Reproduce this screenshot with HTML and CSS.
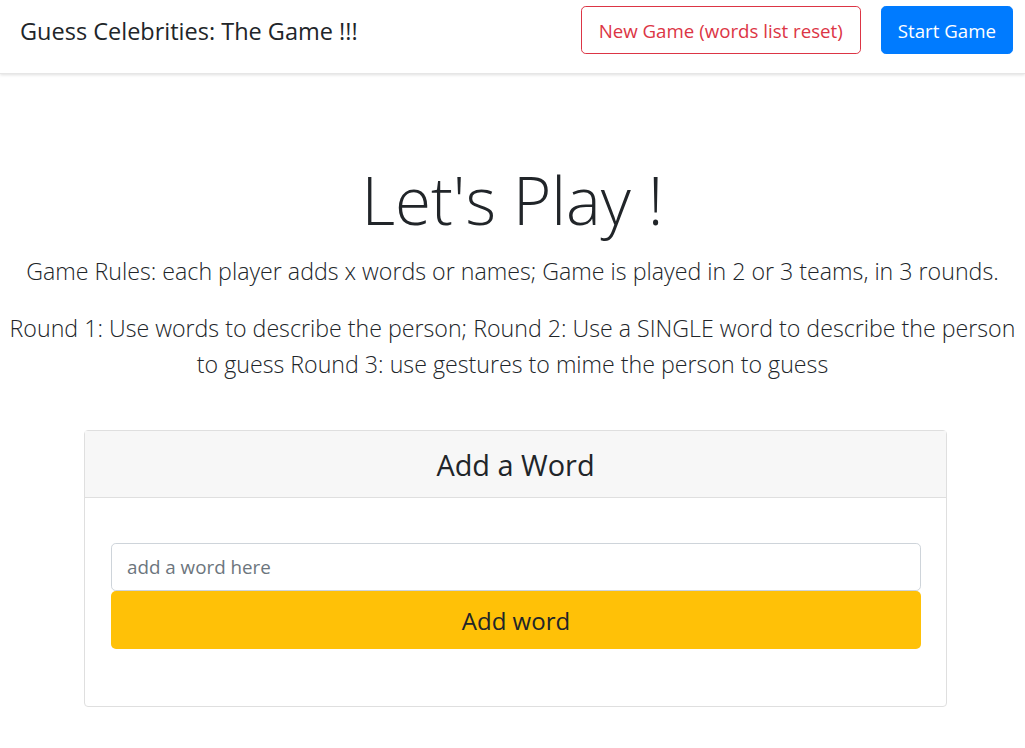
FILE: index.html
```html
<!DOCTYPE html>
<html lang="en">
<head>
<meta charset="utf-8">
<title>Guess Celebrities</title>
<link rel="stylesheet" href="styles.css">
</head>
<body>
<nav class="navbar">
  <span class="brand">Guess Celebrities: The Game !!!</span>
  <div class="nav-actions">
    <button class="btn btn-outline-danger">New Game (words list reset)</button>
    <button class="btn btn-primary">Start Game</button>
  </div>
</nav>
<main class="main">
  <h1 class="display">Let's Play !</h1>
  <p class="lead">Game Rules: each player adds x words or names; Game is played in 2 or 3 teams, in 3 rounds.</p>
  <p class="lead rounds">Round 1: Use words to describe the person; Round 2: Use a SINGLE word to describe the person<br>to guess Round 3: use gestures to mime the person to guess</p>
  <section class="card">
    <header class="card-header"><h2 class="card-title">Add a Word</h2></header>
    <div class="card-body">
      <form class="word-form">
        <input class="input" type="text" placeholder="add a word here">
        <button type="button" class="btn-add">Add word</button>
      </form>
    </div>
  </section>
</main>
</body>
</html>
```

FILE: styles.css
```css
* { box-sizing: border-box; }
html, body { margin: 0; padding: 0; }
body {
  font-family: "Open Sans", "Noto Sans", sans-serif;
  color: #212529;
  background: #fff;
  width: 1025px;
}
.navbar {
  height: 74px;
  display: flex;
  align-items: flex-start;
  justify-content: space-between;
  padding: 6px 12px 0 20px;
  box-shadow: 0 1px 3px rgba(0,0,0,.13);
  border-bottom: 1px solid #e6e6e6;
}
.brand {
  font-size: 23.5px;
  line-height: 50px;
  font-weight: 400;
}
.nav-actions { display: flex; gap: 20px; }
.btn {
  font-family: inherit;
  font-size: 18.7px;
  height: 48px;
  padding: 0 17px;
  border-radius: 4.8px;
  border: 1px solid transparent;
  background: #fff;
}
.btn-outline-danger { color: #dc3545; border-color: #dc3545; }
.btn-primary { background: #007bff; border-color: #007bff; color: #fff; padding: 0 16px; }
.main { padding: 0; text-align: center; }
.display {
  margin: 0 0 13px;
  padding-top: 86px;
  font-size: 65.5px;
  font-weight: 300;
  line-height: 80px;
}
.lead {
  margin: 0;
  font-size: 23.2px;
  font-weight: 300;
  line-height: 36px;
}
.rounds { margin-top: 21px; }
.card {
  margin: 48px 78px 0 84px;
  border: 1px solid #dfdfdf;
  border-radius: 4px;
  text-align: left;
}
.card-header {
  background: #f7f7f7;
  border-bottom: 1px solid #dfdfdf;
  height: 67px;
  display: flex;
  align-items: center;
  justify-content: center;
}
.card-title { margin: 0; font-size: 28.9px; font-weight: 400; }
.card-body { padding: 45px 25px 57px 26px; }
.word-form { display: flex; flex-direction: column; }
.input {
  height: 48px;
  border: 1px solid #ced4da;
  border-radius: 4.8px;
  padding: 0 15px;
  font-family: inherit;
  font-size: 18.8px;
  color: #495057;
}
.input::placeholder { color: #6c757d; }
.btn-add {
  height: 58px;
  border: none;
  border-radius: 5px;
  background: #ffc107;
  color: #212529;
  font-family: inherit;
  font-size: 24px;
  font-weight: 400;
}
```
